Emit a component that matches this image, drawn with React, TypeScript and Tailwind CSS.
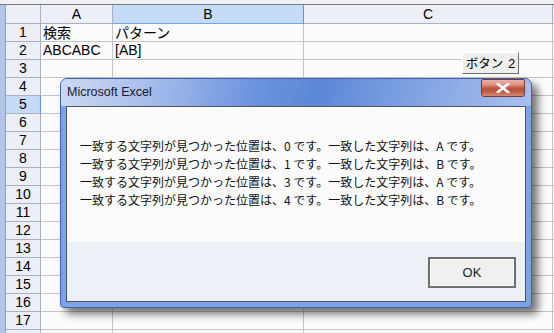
import React from "react";

const rows = Array.from({ length: 18 }, (_, i) => i + 1);

const cellText: Record<number, [string, string]> = {
  1: ["検索", "パターン"],
  2: ["ABCABC", "[AB]"],
};

const lines = [
  "一致する文字列が見つかった位置は、0 です。一致した文字列は、A です。",
  "一致する文字列が見つかった位置は、1 です。一致した文字列は、B です。",
  "一致する文字列が見つかった位置は、3 です。一致した文字列は、A です。",
  "一致する文字列が見つかった位置は、4 です。一致した文字列は、B です。",
];

const latin = { fontFamily: '"Liberation Sans", "Noto Sans CJK JP", sans-serif' };

export default function App() {
  return (
    <div
      className="relative w-[554px] h-[333px] overflow-hidden bg-[#fcfcfc] text-black"
      style={{ fontFamily: '"Noto Sans CJK JP", "Liberation Sans", sans-serif' }}
    >
      {/* top strip */}
      <div className="h-[4px] bg-[#eef0f4]" />
      <div className="h-[1px] bg-[#7a7a7a]" />
      <div className="flex">
        {/* left strip */}
        <div className="w-[6px] shrink-0 bg-[#b3c4e6] border-r border-[#8fa2c8]" />
        <div className="flex-1 flex flex-col">
          {/* header row */}
          <div className="flex h-[19px] text-[14px] leading-[18px]" style={latin}>
            <div className="w-[35px] shrink-0 bg-[#eceff7] border-r border-b border-[#a9b1c2]" />
            <div className="w-[72px] shrink-0 bg-[#eceff7] border-r border-b border-[#a9b1c2] text-center">A</div>
            <div className="w-[191px] shrink-0 bg-[#c5dcf8] border-r border-b border-r-[#5b93e6] border-b-[#7aa6e8] text-center">B</div>
            <div className="w-[249px] shrink-0 bg-[#eceff7] border-r border-b border-[#a9b1c2] text-center">C</div>
            <div className="flex-1 bg-[#eceff7] border-b border-[#a9b1c2]" />
          </div>
          {rows.map((r) => (
            <div key={r} className="flex h-[18px] text-[14px] leading-[17px]">
              <div
                className={
                  r === 5
                    ? "w-[35px] shrink-0 bg-[#c5dcf8] border-r border-b border-r-[#5b93e6] border-b-[#a9b1c2] text-center"
                    : "w-[35px] shrink-0 bg-[#eceff7] border-r border-b border-[#a9b1c2] text-center"
                }
                style={latin}
              >
                {r < 18 ? r : ""}
              </div>
              <div
                className="w-[72px] shrink-0 border-r border-b border-[#c4c4c4] pl-[2px] whitespace-nowrap"
                style={r === 2 ? latin : undefined}
              >
                {cellText[r]?.[0] ?? ""}
              </div>
              <div
                className="w-[191px] shrink-0 border-r border-b border-[#c4c4c4] pl-[2px] whitespace-nowrap"
                style={r === 2 ? latin : undefined}
              >
                {cellText[r]?.[1] ?? ""}
              </div>
              <div className="w-[249px] shrink-0 border-r border-b border-[#c4c4c4]" />
              <div className="flex-1 border-b border-[#c4c4c4]" />
            </div>
          ))}
        </div>
      </div>

      {/* sheet button */}
      <div className="absolute left-[462px] top-[52px] w-[57px] h-[22px] bg-[#eeeeec] border border-t-white border-l-white border-r-[#6f6f6f] border-b-[#6f6f6f] text-[12.5px] leading-[20px] text-center whitespace-nowrap">
        ボタン<span className="ml-[5px]" style={latin}>2</span>
      </div>

      {/* dialog */}
      <div className="absolute left-[60px] top-[78px] w-[472px] h-[230px] rounded-t-[7px] rounded-b-[4px] border border-[#3f63b4] bg-[#7ea2e6] shadow-[6px_6px_9px_rgba(0,0,0,0.55)] flex flex-col">
        <div className="relative h-[27px] shrink-0 rounded-t-[6px] bg-[linear-gradient(100deg,#cdd9f2_0%,#a8bfec_18%,#6a92dc_42%,#5c88d8_55%,#86a6e4_78%,#a7bfed_100%)]">
          <span
            className="absolute left-[6px] top-[6px] text-[12.5px] leading-[14px] text-[#141a2e]"
            style={{ fontFamily: '"Liberation Sans", sans-serif' }}
          >
            Microsoft Excel
          </span>
          <div className="absolute left-[420px] top-0 w-[44px] h-[18px] rounded-b-[3px] rounded-t-[2px] border border-[#7a3a30] bg-[linear-gradient(to_bottom,#eab2a8_0%,#dd9282_30%,#c0573f_50%,#b9523a_65%,#d58a74_100%)] flex items-center justify-center">
            <svg width="14" height="10" viewBox="0 0 14 10">
              <path d="M2 1 L12 9 M12 1 L2 9" stroke="#ffffff" strokeWidth="2.6" strokeLinecap="square" />
            </svg>
          </div>
        </div>
        <div className="mx-[5px] mb-[5px] flex-1 border border-[#4f5460] flex flex-col bg-[#ecf0f7]">
          <div
            className="h-[135px] bg-[#fbfbfb] pt-[30px] pl-[13px] text-[12px] leading-[18px] text-[#111]"
            style={{ fontFamily: '"Noto Sans CJK JP", sans-serif' }}
          >
            {lines.map((l, i) => (
              <div key={i} className="whitespace-nowrap">
                {l}
              </div>
            ))}
          </div>
          <div className="flex-1 flex justify-end items-start pt-[15px] pr-[9px]">
            <div className="w-[88px] h-[31px] border-2 border-[#6e6e6e] bg-[#f0f0f0] flex items-center justify-center">
              <div className="w-full h-full border border-white flex items-center justify-center text-[13px] text-[#1a1a1a]" style={{ fontFamily: '"Liberation Sans", sans-serif' }}>
                OK
              </div>
            </div>
          </div>
        </div>
      </div>
    </div>
  );
}
